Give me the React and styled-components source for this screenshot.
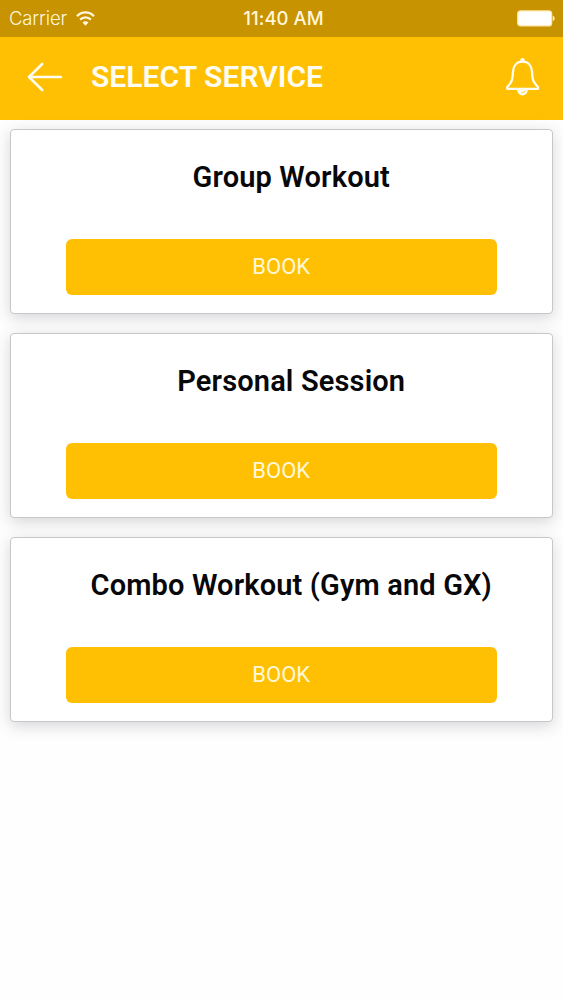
import styled, { createGlobalStyle } from "styled-components";

const GlobalStyle = createGlobalStyle`
    * {
        box-sizing: border-box;
    }

    body {
        margin: 0;
        background-color: #fefefe;
        font-family: Roboto, sans-serif;
    }
`

const Screen = styled.div`
    min-height: 1000px;
    overflow: hidden;
`

const StatusBar = styled.div`
    display: grid;
    grid-template-columns: 1fr auto 1fr;
    align-items: center;

    height: 37px;
    padding: 0px 8px 1px 9px;

    background-color: #c79300;
    color: #fff6dc;
    font-family: Inter, sans-serif;
`

const Carrier = styled.div`
    display: flex;
    align-items: center;
    column-gap: 9px;

    font-size: 18.5px;
    font-weight: 300;
    letter-spacing: -0.15px;
`

const Time = styled.div`
    padding-left: 3px;

    font-size: 18.5px;
    font-weight: 500;
    letter-spacing: 0.05px;
`

const Battery = styled.svg`
    justify-self: end;
`

const Header = styled.header`
    display: flex;
    align-items: center;

    height: 83px;
    padding: 0px 22px 4px 27px;

    background-color: #ffc003;
    color: #fffdf2;
`

const HeaderTitle = styled.h1`
    flex: 1;
    margin: 0px 0px 0px 28px;

    font-size: 30px;
    font-weight: 600;
    line-height: 36px;
    letter-spacing: 0.05px;
`

const List = styled.main`
    display: flex;
    flex-flow: column;
    row-gap: 19.5px;

    padding: 9px 10px 0px 9.5px;
`

const Card = styled.section`
    display: flex;
    flex-flow: column;
    justify-content: space-between;

    height: 184.5px;
    padding: 29px 55px 17.5px 55px;

    background-color: #ffffff;
    border: #c6c6cb solid 1.5px;
    border-radius: 4px;
    box-shadow: 0px 4px 15px rgba(40, 40, 60, 0.19);
`

const CardTitle = styled.h2`
    margin: 0px -20px 0px 0px;

    color: #08080a;
    font-size: 29px;
    font-weight: 600;
    line-height: 36px;
    letter-spacing: 0.15px;
    text-align: center;
    white-space: nowrap;
`

const BookButton = styled.button`
    height: 56px;
    padding: 0px 0px 2px 0px;

    background-color: #ffc003;
    border: none;
    border-radius: 6px;
    color: #fff8d8;

    font-family: inherit;
    font-size: 22px;
`

const services = ["Group Workout", "Personal Session", "Combo Workout (Gym and GX)"]

const WifiIcon = () => (
    <svg width="19" height="15" viewBox="0 0 19 15" fill="none" stroke="currentColor" strokeWidth="2.2">
        <path d="M1 5.2C5.8 0.1 13.2 0.1 18 5.2" />
        <path d="M4.1 8.6C7.2 5.5 11.8 5.5 14.9 8.6" />
        <path d="M9.5 14.8L6.5 11.6C8.3 9.7 10.7 9.7 12.5 11.6Z" fill="currentColor" stroke="none" />
    </svg>
)

const BatteryIcon = () => (
    <Battery width="38" height="17" viewBox="0 0 38 17">
        <rect x="0.7" y="0.9" width="34" height="15" rx="3" fill="#fff" stroke="#ffe8a8" strokeWidth="1.2" />
        <path d="M35.8 5.8C38.2 6.6 38.2 10.2 35.8 11Z" fill="#fff3cf" />
    </Battery>
)

const BackIcon = () => (
    <svg width="36" height="30" viewBox="0 0 36 30" fill="none" stroke="currentColor" strokeWidth="2.6" strokeLinecap="round" strokeLinejoin="round">
        <path d="M15.2 2L2 15L15.2 28M2.5 15H34" />
    </svg>
)

const BellIcon = () => (
    <svg width="36" height="40" viewBox="0 0 36 40" fill="none" stroke="currentColor" strokeWidth="2.3" strokeLinejoin="round">
        <path d="M17.5 4.6C11.7 4.6 8.3 8.8 8 14.8C7.6 23 6.8 25.4 2.2 30V31.8H33V30C28.2 25.4 27.4 23 27 14.8C26.7 8.8 23.3 4.6 17.5 4.6Z" />
        <circle cx="17.5" cy="3.2" r="2.2" fill="currentColor" stroke="none" />
        <path d="M12 32C12.4 40.6 22.6 40.6 23 32Z" fill="currentColor" stroke="none" />
        <path d="M16.5 35.6Q19.7 35.9 20.6 33.3" stroke="#ffc003" strokeWidth="0.8" />
    </svg>
)

const ServiceCard = ({title}) => (
    <Card>
        <CardTitle>{title}</CardTitle>
        <BookButton>BOOK</BookButton>
    </Card>
)

const App = () => {
    return (
        <Screen>
            <GlobalStyle />
            <StatusBar>
                <Carrier>Carrier <WifiIcon /></Carrier>
                <Time>11:40 AM</Time>
                <BatteryIcon />
            </StatusBar>
            <Header>
                <BackIcon />
                <HeaderTitle>SELECT SERVICE</HeaderTitle>
                <BellIcon />
            </Header>
            <List>
                {services.map((title) => <ServiceCard key={title} title={title} />)}
            </List>
        </Screen>
    );
}

export default App;
